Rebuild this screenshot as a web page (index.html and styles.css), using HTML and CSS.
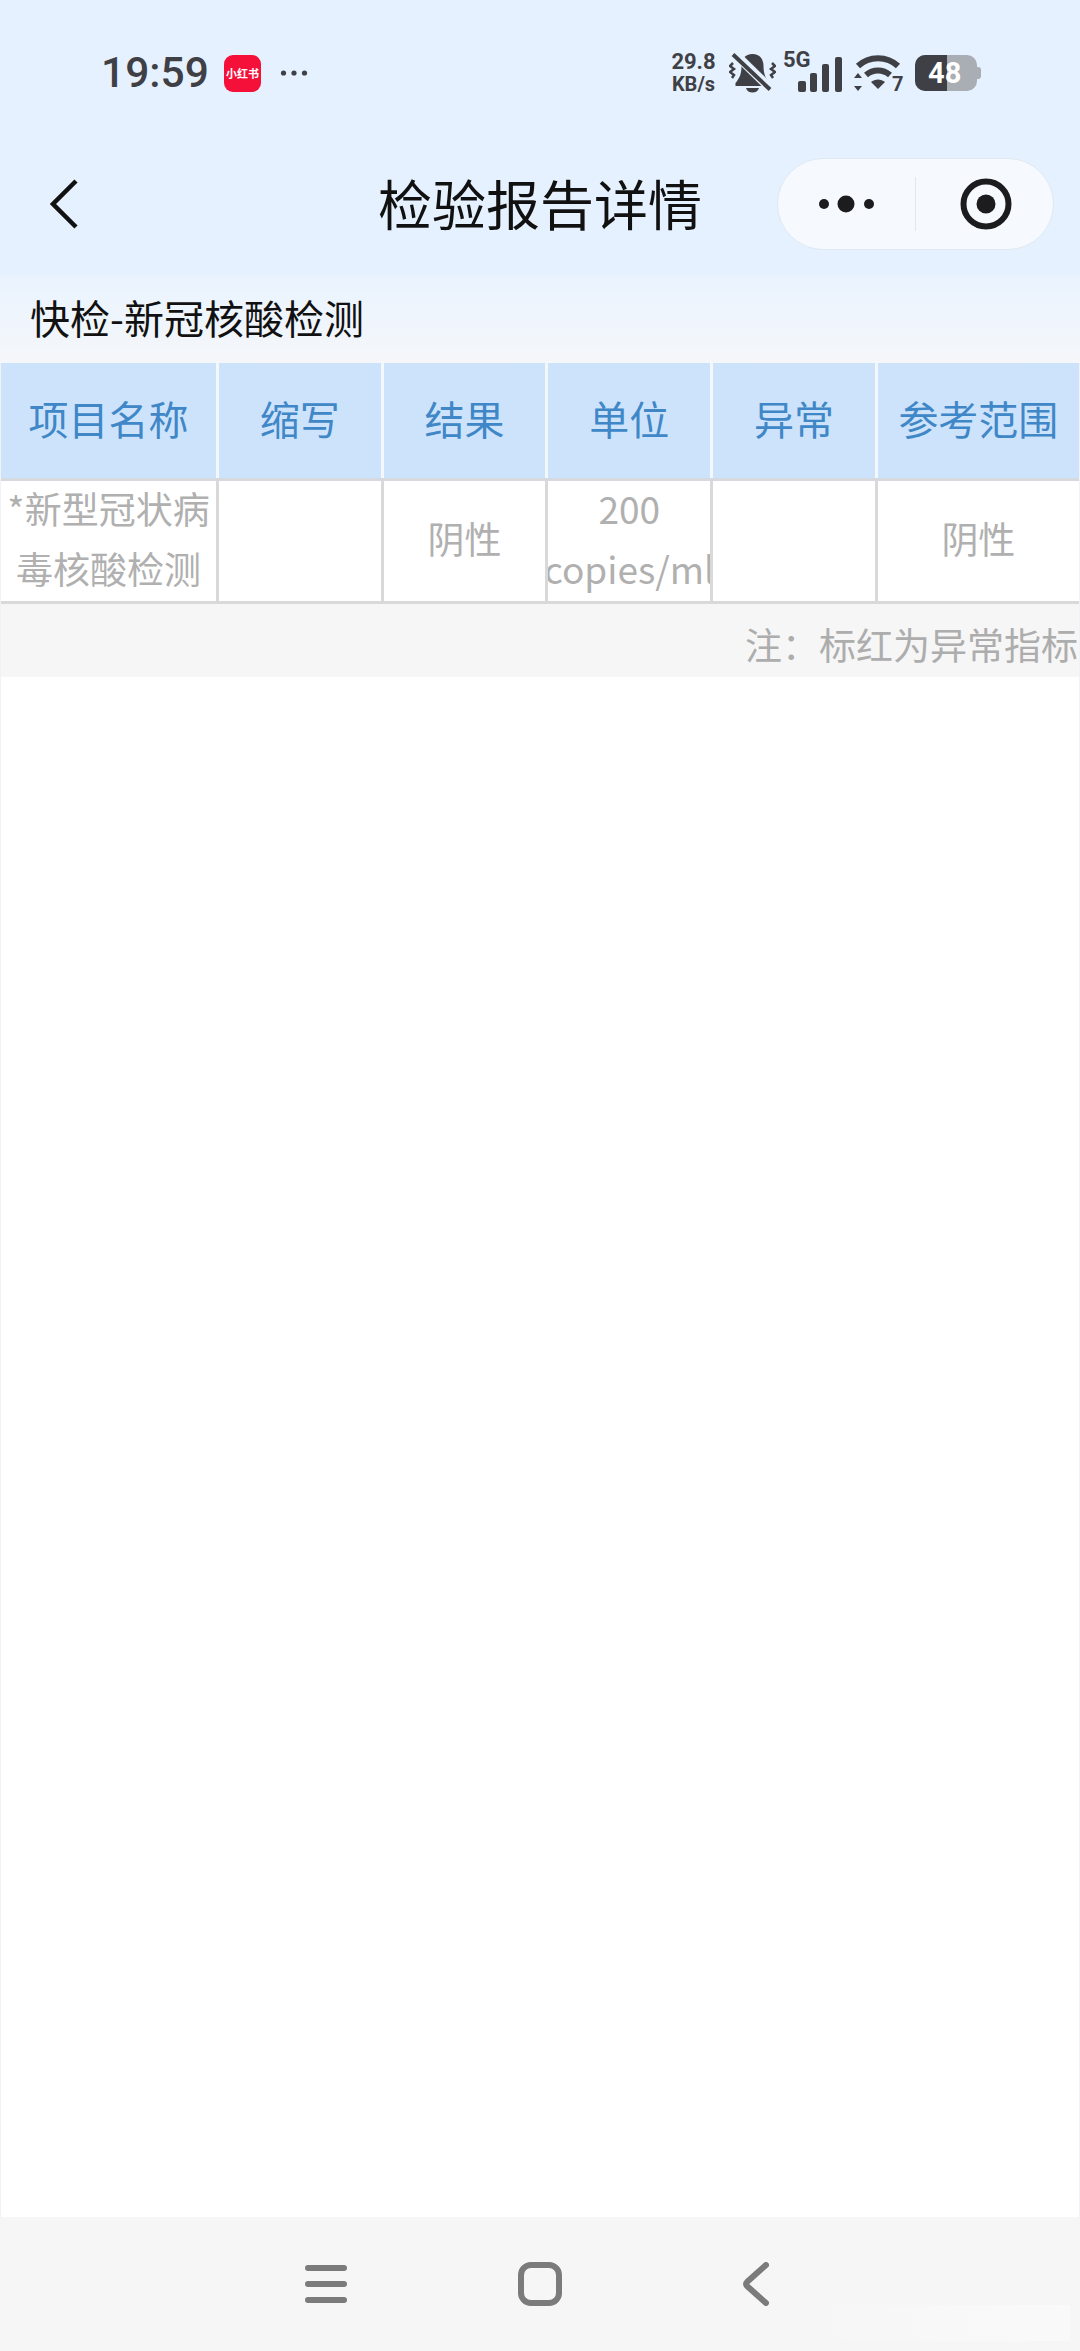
FILE: index.html
```html
<!DOCTYPE html>
<html lang="zh-CN">
<head>
    <meta charset="UTF-8">
    <meta name="viewport" content="width=device-width, initial-scale=1.0">
    <title>检验报告详情</title>
    <link rel="stylesheet" href="styles.css">
</head>
<body>
    <div class="page">
        <div class="top">
            <div class="statusbar">
                <div class="status-left">
                    <span class="time">19:59</span>
                    <span class="app-badge">小红书</span>
                    <svg class="more-dots" width="28" height="8" viewBox="0 0 28 8"><circle cx="3.5" cy="4" r="2.6"/><circle cx="14" cy="4" r="2.6"/><circle cx="24.5" cy="4" r="2.6"/></svg>
                </div>
                <div class="status-right">
                    <div class="speed"><span>29.8</span><span class="speed-unit">KB/s</span></div>
                    <svg class="bell" width="47" height="40" viewBox="0 0 47 40">
                        <!-- vibrate marks -->
                        <path d="M4 10l-3 3 4 3-4 3 4 3-2 3" class="squiggle"/>
                        <path d="M43 10l3 3-4 3 4 3-4 3 2 3" class="squiggle"/>
                        <path d="M23.500 1c-7.500 0-11 5.500-11 12 0 8-2 12-6 17v3h34v-3c-4-5-6-9-6-17 0-6.500-3.500-12-11-12z"/>
                        <path d="M17 35h13c-.8 3-3.400 4.500-6.500 4.500S17.800 38 17 35z"/>
                        <path d="M6 1l35 34" class="bell-gap"/>
                        <path d="M4 1.500l37 35" class="bell-slash"/>
                    </svg>
                    <div class="network">
                        <span class="network-type">5G</span>
                        <svg width="45" height="35" viewBox="0 0 45 35">
                            <rect x="1" y="24" width="8" height="11" rx="2"/>
                            <rect x="13" y="16" width="7" height="19" rx="2"/>
                            <rect x="25" y="7" width="7" height="28" rx="2"/>
                            <rect x="38" y="0" width="7" height="35" rx="2"/>
                        </svg>
                    </div>
                    <svg class="wifi" width="48" height="37" viewBox="0 0 48 37">
                        <path d="M4 11C15 .5 33 .5 44 11" class="wifi-arc"/>
                        <path d="M12 20c7-6 17-6 24 0" class="wifi-arc"/>
                        <path d="M17 27c4-3.500 10-3.500 14 0l-7 7z"/>
                        <path d="M4 18l4-5 4 5zM4 26l4 5 4-5z" transform="translate(-4 5)"/>
                        <text x="38" y="36" class="wifi-num">7</text>
                    </svg>
                    <div class="battery">
                        <div class="battery-body">
                            <div class="battery-level"></div>
                            <span class="battery-num">48</span>
                        </div>
                        <div class="battery-nub"></div>
                    </div>
                </div>
            </div>
            <div class="navbar">
                <svg class="nav-back" width="28" height="50" viewBox="0 0 28 50"><path d="M26 2L3 25l23 23"/></svg>
                <div class="nav-title">检验报告详情</div>
                <div class="capsule">
                    <div class="capsule-part">
                        <svg width="56" height="18" viewBox="0 0 56 18"><circle cx="5" cy="9" r="5"/><circle cx="27" cy="9" r="8.500"/><circle cx="50" cy="9" r="5"/></svg>
                    </div>
                    <div class="capsule-line"></div>
                    <div class="capsule-part">
                        <svg width="52" height="52" viewBox="0 0 52 52"><circle cx="26" cy="26" r="22.500" class="ring"/><circle cx="26" cy="26" r="9.500"/></svg>
                    </div>
                </div>
            </div>
        </div>

        <div class="report-name">快检-新冠核酸检测</div>

        <div class="report-table">
            <div class="row row-head">
                <div class="cell">项目名称</div>
                <div class="cell">缩写</div>
                <div class="cell">结果</div>
                <div class="cell">单位</div>
                <div class="cell">异常</div>
                <div class="cell">参考范围</div>
            </div>
            <div class="row row-body">
                <div class="cell"><span>*新型冠状病</span><span>毒核酸检测</span></div>
                <div class="cell"></div>
                <div class="cell">阴性</div>
                <div class="cell"><span>200</span><span>copies/ml</span></div>
                <div class="cell"></div>
                <div class="cell">阴性</div>
            </div>
        </div>
        <div class="note">注：标红为异常指标</div>

        <div class="blank"></div>

        <div class="bottom-nav">
            <svg width="42" height="38" viewBox="0 0 42 38"><path d="M3 3h36M3 19h36M3 35h36"/></svg>
            <svg width="44" height="44" viewBox="0 0 44 44"><rect x="3" y="3" width="38" height="38" rx="10"/></svg>
            <svg width="28" height="44" viewBox="0 0 28 44"><path d="M25 3L6 20q-2 2 0 4l19 17"/></svg>
            <div class="watermark"></div>
        </div>
    </div>
</body>
</html>
```
FILE: styles.css
```css
* {
    box-sizing: border-box;
}
html, body {
    margin: 0;
    padding: 0;
    background: #fff;
}
body {
    font-family: "Noto Sans CJK SC", Roboto, sans-serif;
}
.page {
    width: 1080px;
    height: 2351px;
    display: flex;
    flex-direction: column;
    border-left: 1px solid #f0f2f5;
    border-right: 1px solid #f0f2f5;
}
.top {
    background: #e5f1fe;
    height: 275px;
    margin: 0 -1px;
}
.statusbar {
    height: 146px;
    display: flex;
    align-items: center;
    justify-content: space-between;
    padding: 0 99px 0 101px;
    color: #3f4045;
}
.status-left {
    display: flex;
    align-items: center;
}
.time {
    font-family: Roboto, sans-serif;
    font-size: 42.5px;
    font-weight: 500;
    line-height: 1;
    width: 106px;
    white-space: nowrap;
}
.app-badge {
    width: 37px;
    height: 37px;
    margin-left: 17px;
    border-radius: 9px;
    background: #f5103a;
    color: #fff;
    font-size: 11px;
    font-weight: 700;
    line-height: 37px;
    text-align: center;
    white-space: nowrap;
    overflow: hidden;
}
.more-dots {
    margin-left: 19px;
    fill: #3f4045;
}
.status-right {
    display: flex;
    align-items: center;
}
.speed {
    width: 45px;
    display: flex;
    flex-direction: column;
    align-items: center;
    font-family: Roboto, sans-serif;
    font-weight: 700;
    font-size: 22px;
    line-height: 23px;
}
.speed-unit {
    font-size: 20px;
    white-space: nowrap;
}
.bell {
    margin-left: 13px;
    fill: #3f4045;
}
.squiggle {
    fill: none;
    stroke: #3f4045;
    stroke-width: 2.500;
}
.bell-gap {
    fill: none;
    stroke: #e5f1fe;
    stroke-width: 9;
}
.bell-slash {
    fill: none;
    stroke: #3f4045;
    stroke-width: 4;
}
.network {
    position: relative;
    margin-left: 7px;
    width: 59px;
    height: 38px;
    display: flex;
    justify-content: flex-end;
    align-items: flex-end;
    fill: #3f4045;
}
.network-type {
    position: absolute;
    left: 0;
    top: -5px;
    font-family: Roboto, sans-serif;
    font-size: 22px;
    font-weight: 700;
    line-height: 22px;
}
.wifi {
    margin-left: 12px;
    fill: #3f4045;
    overflow: visible;
}
.wifi-arc {
    fill: none;
    stroke: #3f4045;
    stroke-width: 6;
}
.wifi-num {
    font-family: Roboto, sans-serif;
    font-size: 20px;
    font-weight: 700;
}
.battery {
    margin-left: 13px;
    display: flex;
    align-items: center;
}
.battery-body {
    position: relative;
    width: 62px;
    height: 36px;
    border-radius: 10px;
    overflow: hidden;
    background: #a9adb4;
}
.battery-level {
    width: 32px;
    height: 100%;
    background: #3f4045;
}
.battery-num {
    position: absolute;
    top: 0;
    left: 13px;
    color: #fff;
    font-family: Roboto, sans-serif;
    font-size: 29px;
    font-weight: 700;
    line-height: 36px;
}
.battery-nub {
    width: 4px;
    height: 12px;
    background: #a9adb4;
    border-radius: 0 3px 3px 0;
}
.navbar {
    height: 116px;
    display: grid;
    grid-template-columns: minmax(0, 1fr) 324px minmax(0, 1fr);
    align-items: center;
    padding: 0 27px;
}
.nav-back {
    margin-left: 23px;
    fill: none;
    stroke: #111;
    stroke-width: 4.500;
}
.nav-title {
    font-size: 54px;
    line-height: 1;
    margin-top: -3px;
    color: #111;
    white-space: nowrap;
}
.capsule {
    justify-self: end;
    width: 277px;
    height: 92px;
    margin-right: -1px;
    border-radius: 46px;
    background: #f6faff;
    border: 1px solid #dfe8f2;
    display: flex;
    align-items: center;
}
.capsule-part {
    flex: 1;
    display: flex;
    justify-content: center;
    align-items: center;
    fill: #1c1c1e;
}
.capsule-part:last-child svg {
    margin-left: 2px;
}
.capsule-line {
    width: 1px;
    height: 54px;
    background: #e3e8ee;
}
.ring {
    fill: none;
    stroke: #1c1c1e;
    stroke-width: 6;
}
.report-name {
    height: 88px;
    margin: 0 -1px;
    padding: 0 0 0 30px;
    font-size: 40px;
    line-height: 84px;
    color: #111;
    background: linear-gradient(#e9f3fe, #f5f7fa);
}
.row {
    display: grid;
    grid-template-columns: 215px repeat(4, 161.7px) 1fr;
    column-gap: 3px;
}
.row-head {
    height: 118px;
    background: #f4f7fb;
    border-bottom: 3px solid #d6d9dd;
}
.row-head .cell {
    background: #cde3fb;
    color: #3f87c7;
    font-size: 40px;
    padding-bottom: 5px;
}
.row-body {
    height: 123px;
    background: #d9d9d9;
    border-bottom: 3px solid #d9d9d9;
}
.row-body .cell {
    background: #fff;
    color: #b0b0b0;
    font-size: 37px;
    line-height: 60px;
    padding-bottom: 6px;
    overflow: hidden;
}
.cell {
    display: flex;
    flex-direction: column;
    align-items: center;
    justify-content: center;
    white-space: nowrap;
}
.note {
    height: 73px;
    padding-right: 1px;
    background: #f6f6f6;
    color: #adadad;
    font-size: 37px;
    line-height: 81px;
    text-align: right;
    overflow: hidden;
}
.blank {
    flex: 1;
}
.bottom-nav {
    position: relative;
    height: 134px;
    margin: 0 -1px;
    background: #f6f6f6;
    display: flex;
    align-items: flex-start;
    padding: 45px 0 0 305px;
}
.bottom-nav svg {
    fill: none;
    stroke: #7b7b7b;
    stroke-width: 6;
    stroke-linecap: round;
}
.bottom-nav svg:nth-child(1) {
    margin-top: 3px;
}
.bottom-nav svg:nth-child(2) {
    margin-left: 171px;
}
.bottom-nav svg:nth-child(3) {
    margin-left: 179px;
}
.watermark {
    position: absolute;
    right: 10px;
    bottom: 10px;
    width: 270px;
    height: 36px;
    background: linear-gradient(90deg, #f6f6f6, #fafafa 50%, #fdfdfd);
    opacity: .5;
}
```
